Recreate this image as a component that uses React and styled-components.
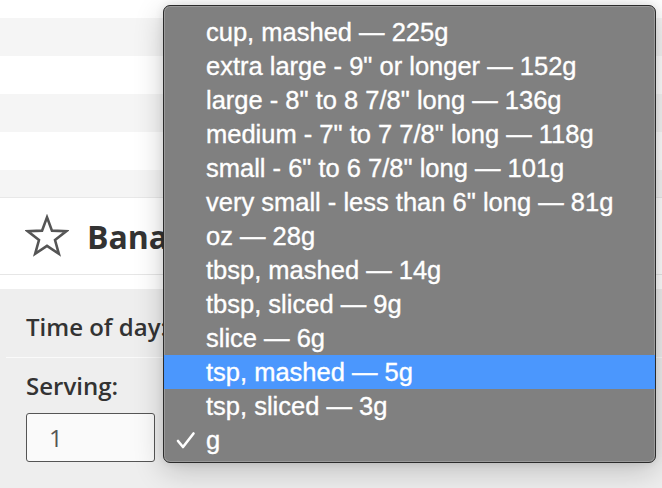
import React from 'react';
import styled, { createGlobalStyle } from 'styled-components';

const units = [
  'cup, mashed — 225g',
  'extra large - 9" or longer — 152g',
  'large - 8" to 8 7/8" long — 136g',
  'medium - 7" to 7 7/8" long — 118g',
  'small - 6" to 6 7/8" long — 101g',
  'very small - less than 6" long — 81g',
  'oz — 28g',
  'tbsp, mashed — 14g',
  'tbsp, sliced — 9g',
  'slice — 6g',
  'tsp, mashed — 5g',
  'tsp, sliced — 3g',
  'g',
];

const GlobalStyle = createGlobalStyle`
  html, body {
    margin: 0;
    padding: 0;
    background: #ffffff;
  }
  body {
    font-family: 'Open Sans', 'Liberation Sans', sans-serif;
    color: #333;
  }
`;

const Page = styled.div`
  position: relative;
  width: 662px;
  height: 488px;
  overflow: hidden;
  background: #fff;
`;

const Stripes = styled.div`
  height: 197px;
  overflow: hidden;
  border-bottom: 1px solid #e8e8e8;
`;

const StripeTrack = styled.div`
  margin-top: -20px;
`;

const Stripe = styled.div`
  height: 38px;
  background: ${p => (p.$odd ? '#f5f5f5' : '#ffffff')};
`;

const Header = styled.div`
  display: flex;
  align-items: center;
  gap: 18px;
  height: 76px;
  padding-left: 25px;
  border-bottom: 1px solid #e6e6e6;
  margin-bottom: 14px;
`;

const Title = styled.h1`
  margin: 0;
  font-size: 32px;
  font-weight: 700;
  color: #333;
  white-space: nowrap;
`;

const Panel = styled.div`
  background: #eeeeee;
  padding-bottom: 40px;
`;

const Field = styled.div`
  display: flex;
  flex-direction: column;
  gap: 11px;
  padding: ${p => p.$pad};
  margin-left: 6px;
  padding-left: 20px;
  border-bottom: ${p => (p.$line ? '1px solid #fafafa' : 'none')};
`;

const Label = styled.div`
  font-size: 24px;
  font-weight: 600;
  color: #333;
  line-height: 32px;
  white-space: nowrap;
`;

const Input = styled.div`
  width: 129px;
  height: 49px;
  box-sizing: border-box;
  border: 1px solid #555;
  border-radius: 3px;
  background: #fafafa;
  font-size: 24px;
  line-height: 47px;
  padding-left: 22px;
  color: #555;
`;

const Menu = styled.div`
  position: absolute;
  left: 163px;
  top: 5px;
  width: 493px;
  box-sizing: border-box;
  padding: 9px 0 5px;
  background: #808080;
  border: 1px solid #2b2b2b;
  border-radius: 7px;
  box-shadow: inset 0 0 0 1px #9a9a9a, 0 8px 30px rgba(0, 0, 0, 0.2), 0 0 8px rgba(0, 0, 0, 0.1);
  font-family: 'Liberation Sans', Arial, sans-serif;
`;

const Item = styled.div`
  position: relative;
  height: 34px;
  line-height: 34px;
  padding-left: 42px;
  font-size: 25.5px;
  color: #fff;
  -webkit-text-stroke: 0.35px #fff;
  white-space: nowrap;
  background: ${p => (p.$active ? '#4b97fd' : 'transparent')};
`;

const Check = styled.svg`
  position: absolute;
  left: 12px;
  top: 8px;
`;

function StarIcon() {
  return (
    <svg width="44" height="44" viewBox="0 0 24 24" fill="none">
      <polygon
        points="12,1.8 14.7,9.08 22.46,9.4 16.37,14.22 18.47,21.7 12,17.4 5.53,21.7 7.63,14.22 1.54,9.4 9.3,9.08"
        stroke="#555"
        strokeWidth="1.4"
        strokeLinejoin="miter"
      />
    </svg>
  );
}

function CheckMark() {
  return (
    <Check width="20" height="20" viewBox="0 0 20 20" fill="none">
      <polyline points="2,10 7,16 17.5,2.5" stroke="#fff" strokeWidth="2.6" strokeLinecap="round" strokeLinejoin="round" />
    </Check>
  );
}

export default function App() {
  return (
    <>
      <GlobalStyle />
      <Page>
        <Stripes>
          <StripeTrack>
            {[0, 1, 2, 3, 4, 5].map(i => (
              <Stripe key={i} $odd={i % 2 === 1} />
            ))}
          </StripeTrack>
        </Stripes>
        <Header>
          <StarIcon />
          <Title>Bananas, raw</Title>
        </Header>
        <Panel>
          <Field $line $pad="22px 0 14px">
            <Label>Time of day:</Label>
          </Field>
          <Field $pad="12px 0 0">
            <Label>Serving:</Label>
            <Input>1</Input>
          </Field>
        </Panel>
        <Menu>
          {units.map(u => (
            <Item key={u} $active={u === 'tsp, mashed — 5g'}>
              {u === 'g' && <CheckMark />}
              {u}
            </Item>
          ))}
        </Menu>
      </Page>
    </>
  );
}
